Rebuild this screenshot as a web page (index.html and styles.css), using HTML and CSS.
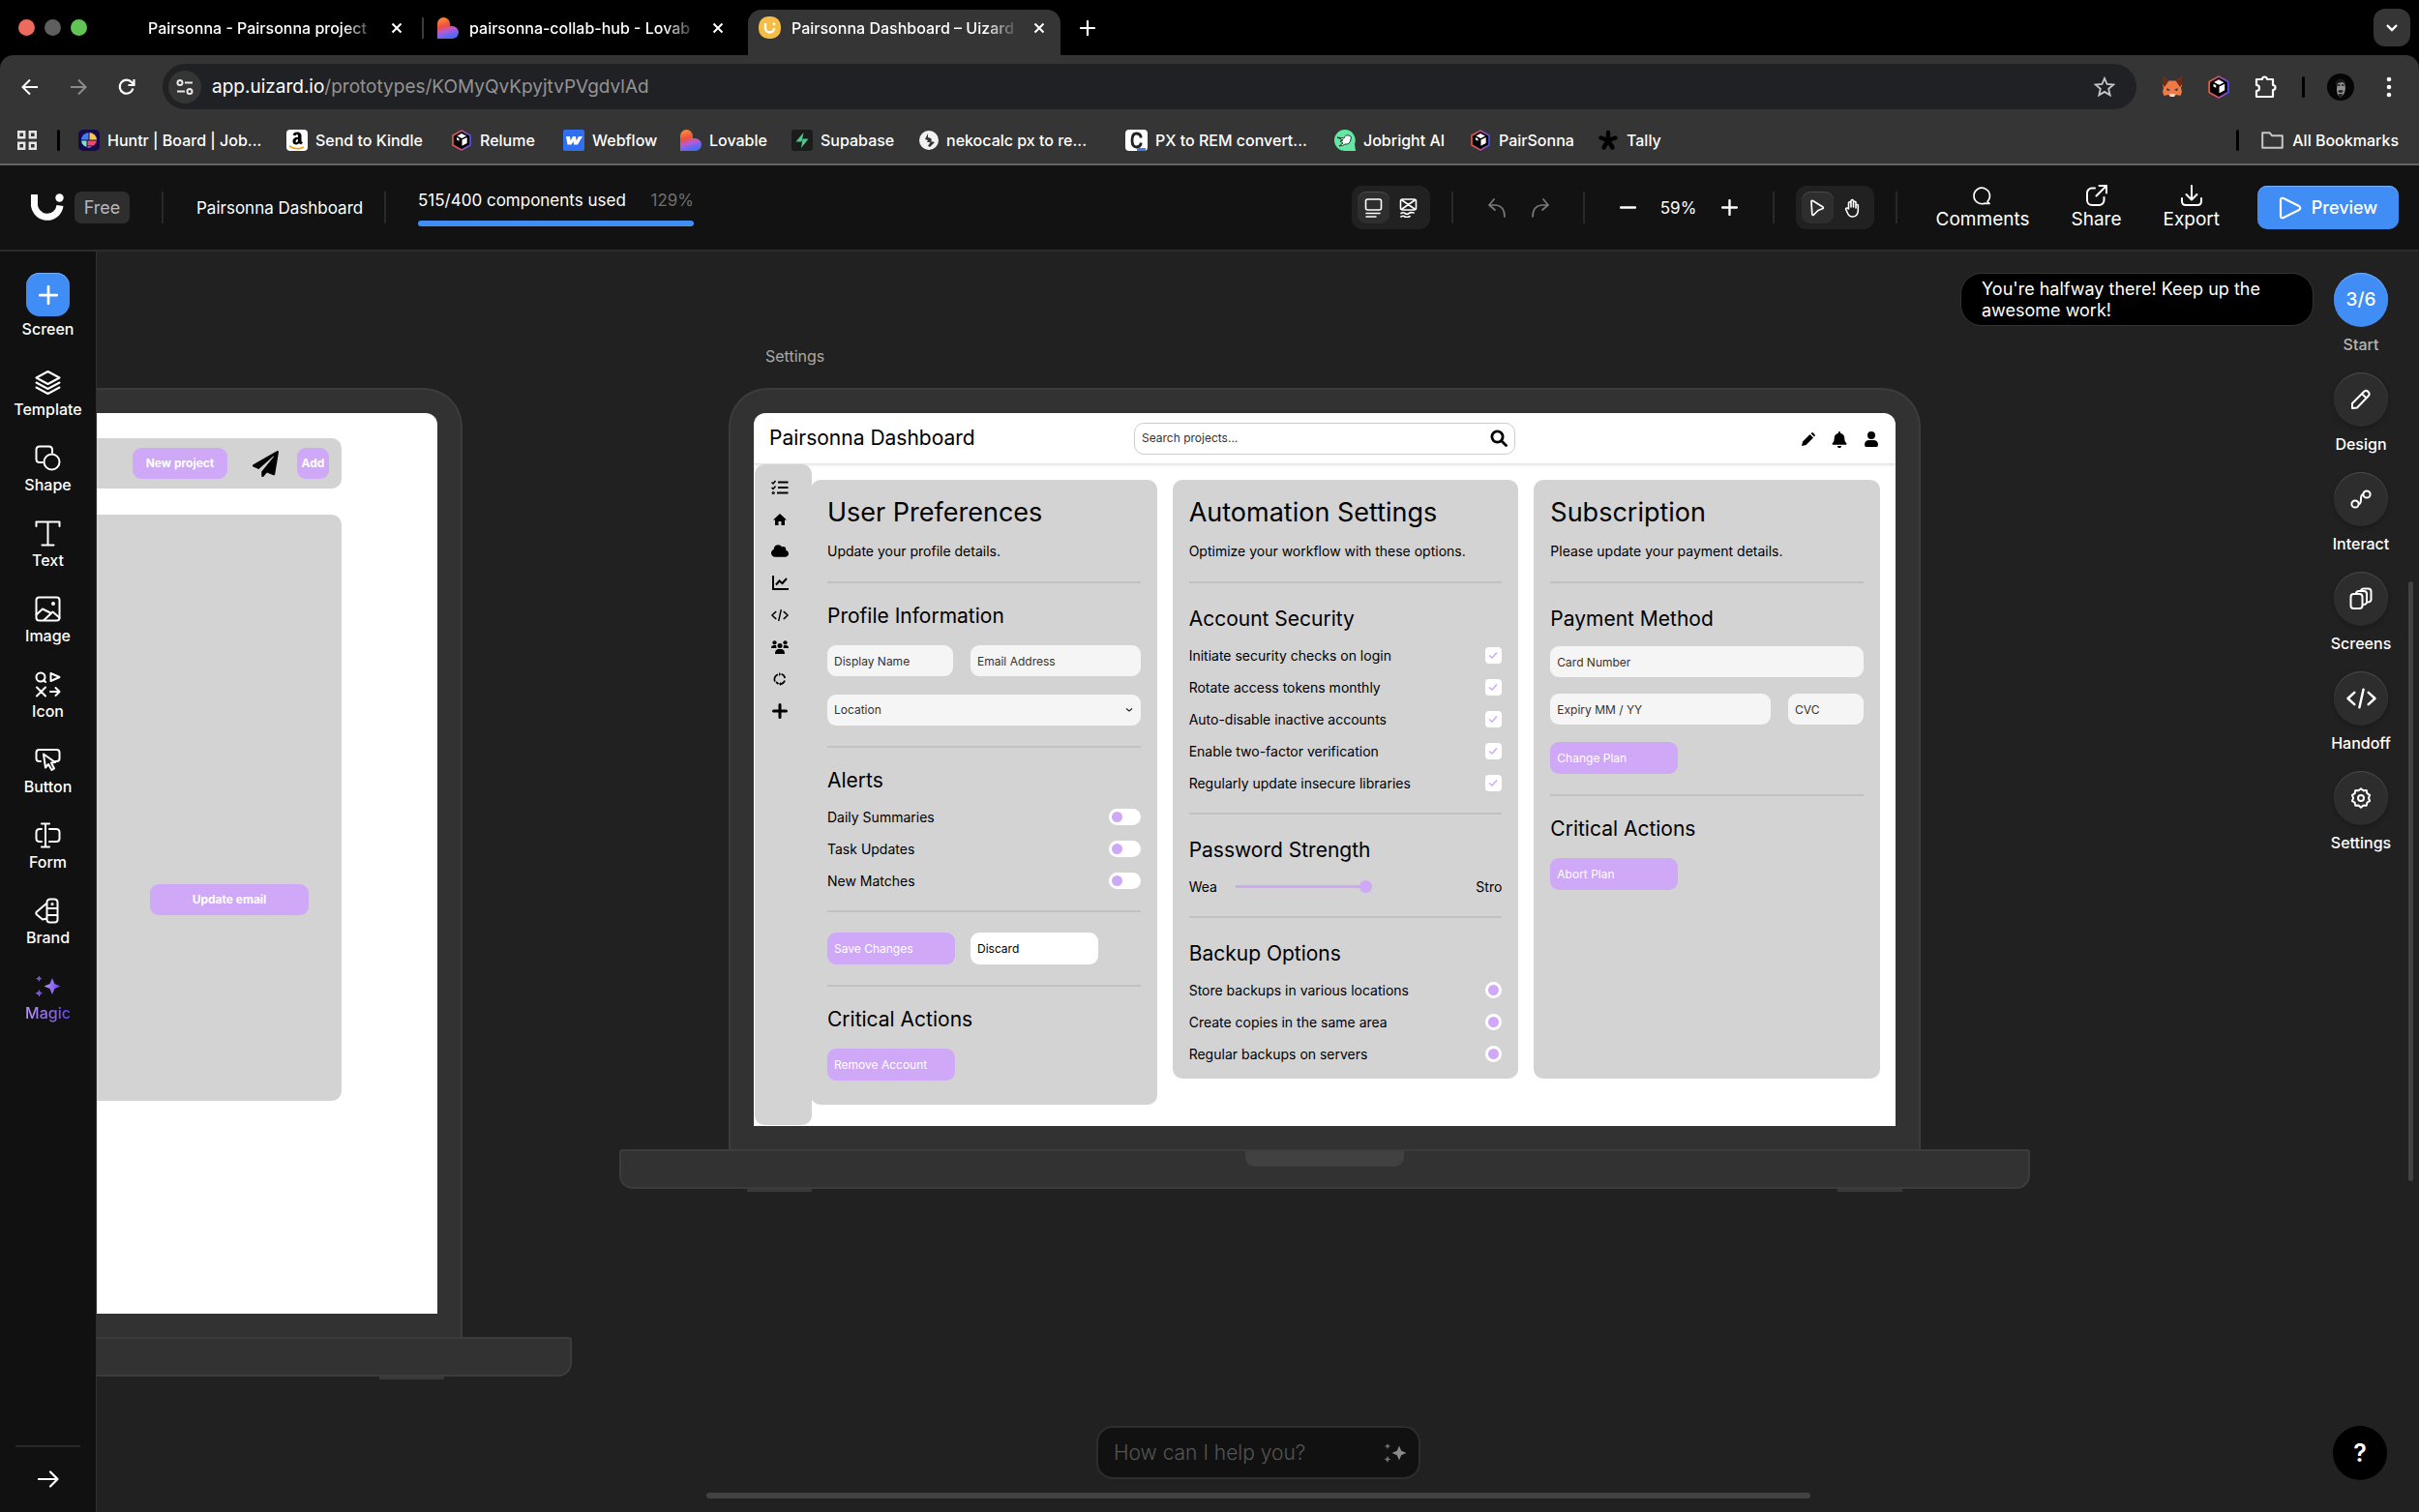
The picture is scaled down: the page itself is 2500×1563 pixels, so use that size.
FILE: index.html
```html
<!DOCTYPE html>
<html lang="en">
<head>
<meta charset="utf-8">
<title>Pairsonna Dashboard – Uizard</title>
<link rel="stylesheet" href="styles.css">
</head>
<body>
<svg class="defs" aria-hidden="true">
  <defs>
    <linearGradient id="heart" x1="0" y1="0" x2="0.3" y2="1"><stop offset="0" stop-color="#ff9a3c"/><stop offset=".45" stop-color="#f0503c"/><stop offset=".7" stop-color="#b45bd8"/><stop offset="1" stop-color="#4a6cf7"/></linearGradient>
    <linearGradient id="hex" x1="0" y1="0" x2="1" y2="0"><stop offset="0" stop-color="#f05a3c"/><stop offset=".5" stop-color="#c0508c"/><stop offset="1" stop-color="#5a50f5"/></linearGradient>
    <linearGradient id="magic" x1="0" y1="0" x2="1" y2="0"><stop offset="0" stop-color="#b79cf5"/><stop offset="1" stop-color="#6a3df0"/></linearGradient>
  </defs>
  <symbol id="i-x" viewBox="0 0 12 12"><path d="M1.500 1.500l9 9M10.500 1.500l-9 9" fill="none" stroke="currentColor" stroke-width="2"/></symbol>
  <symbol id="i-plus" viewBox="0 0 16 16"><path d="M8 1v14M1 8h14" fill="none" stroke="currentColor" stroke-width="2.200" stroke-linecap="round"/></symbol>
  <symbol id="i-minus" viewBox="0 0 16 16"><path d="M1 8h14" fill="none" stroke="currentColor" stroke-width="2.400" stroke-linecap="round"/></symbol>
  <symbol id="i-lovable" viewBox="0 0 22 22"><path d="M0 6.500a6.500 6.500 0 0 1 13 0V9h2.500a6.500 6.500 0 0 1 0 13H0z" fill="url(#heart)"/></symbol>
  <symbol id="i-cube" viewBox="0 0 22 22"><path d="M11 1l9 5v10l-9 5-9-5V6z" fill="#000" stroke="url(#hex)" stroke-width="1.600" stroke-linejoin="round"/><path d="M11 4l5 2.600-4.500 2.400-5-2.600zM11.500 10.500l5.200-2.500v6l-5.200 2.800zM6 8l2.500 1.200v2.500L6 10.500z" fill="#fff"/></symbol>
  <symbol id="i-spark" viewBox="0 0 24 20"><path d="M16 2.500l2.200 5.300 5.300 2.200-5.300 2.200L16 17.500l-2.200-5.300L8.500 10l5.300-2.200z"/><path d="M4 0l.9 2.100L7 3l-2.100.9L4 6l-.9-2.100L1 3l2.100-.9zM4 13l1.100 2.400L7.500 16.500l-2.400 1.100L4 20l-1.100-2.400L.5 16.500l2.400-1.100z" opacity=".8"/></symbol>
  <symbol id="i-code" viewBox="0 0 30 20"><path d="M8 4L1.500 10 8 16M22 4l6.500 6-6.500 6M17 1l-4 18" fill="none" stroke="currentColor" stroke-width="2.400" stroke-linecap="round" stroke-linejoin="round"/></symbol>
  <symbol id="i-check" viewBox="0 0 16 16"><path d="M4 8.500l3 2.500 5-5.500" fill="none" stroke="#cfa8f8" stroke-width="1.500"/></symbol>
</svg>

<div class="browser">
  <div class="tabs">
    <div class="lights"><i class="red"></i><i class="gray"></i><i class="green"></i></div>
    <div class="tab tab-first"><span class="tab-title">Pairsonna - Pairsonna project</span><button class="plain" aria-label="Close tab"><svg width="12" height="12"><use href="#i-x"/></svg></button></div>
    <div class="tab tab-line"><svg width="22" height="22"><use href="#i-lovable"/></svg><span class="tab-title">pairsonna-collab-hub - Lovab</span><button class="plain" aria-label="Close tab"><svg width="12" height="12"><use href="#i-x"/></svg></button></div>
    <div class="tab tab-active"><svg width="23" height="23" viewBox="0 0 23 23"><rect width="23" height="23" rx="10" fill="#f5bd45"/><path d="M7 7v5a4.500 4.500 0 0 0 9 0" fill="none" stroke="#fff" stroke-width="2.400"/><circle cx="16" cy="8" r="1.400" fill="#fff"/></svg><span class="tab-title">Pairsonna Dashboard – Uizard</span><button class="plain" aria-label="Close tab"><svg width="12" height="12"><use href="#i-x"/></svg></button></div>
    <button class="plain new-tab" aria-label="New tab"><svg width="16" height="16"><use href="#i-plus"/></svg></button>
    <button class="tab-menu" aria-label="Search tabs"><svg width="14" height="10" viewBox="0 0 14 10"><path d="M2 2l5 5 5-5" fill="none" stroke="#fff" stroke-width="2.400"/></svg></button>
  </div>
  <div class="address">
    <button class="plain" aria-label="Back"><svg width="18" height="18" viewBox="0 0 18 18"><path d="M17 9H2M9 1.500L1.500 9 9 16.500" fill="none" stroke="#fff" stroke-width="2"/></svg></button>
    <button class="plain" aria-label="Forward"><svg width="18" height="18" viewBox="0 0 18 18"><path d="M1 9h15M9 1.500L16.500 9 9 16.500" fill="none" stroke="#8c8c8c" stroke-width="2"/></svg></button>
    <button class="plain" aria-label="Reload"><svg width="18" height="18" viewBox="0 0 18 18"><path d="M15.500 10.500A7 7 0 1 1 14 4l2.500 2.500M16.500 1v6h-6" fill="none" stroke="#fff" stroke-width="2.200"/></svg></button>
    <div class="omnibox">
      <span class="tune"><svg width="18" height="16" viewBox="0 0 18 16"><g fill="none" stroke="#e8e8e8" stroke-width="2"><circle cx="4" cy="3.500" r="2.500"/><path d="M9 3.500h8M1 12.500h8"/><circle cx="14" cy="12.500" r="2.500"/></g></svg></span>
      <span class="url"><b>app.uizard.io</b>/prototypes/KOMyQvKpyjtvPVgdvlAd</span>
      <svg width="22" height="22" viewBox="0 0 22 22"><path d="M11 2l2.600 6 6.500.600-4.900 4.300 1.500 6.400-5.700-3.400-5.700 3.400 1.500-6.400L1.900 8.600 8.400 8z" fill="none" stroke="#c7c7c7" stroke-width="1.800"/></svg>
    </div>
    <div class="extensions">
      <svg width="22" height="22" viewBox="0 0 22 22"><path d="M1 0l6 4.500h8L21 0v9l-1 3 1 4-1.500 4-4.500-1-2 2h-4l-2-2-4.500 1L1 16l1-4-1-3z" fill="#ee7b45"/><path d="M1 0l6.500 4.500L3 11 1 8zM21 0l-6.500 4.500L19 11l2-3z" fill="#6e2a14"/><path d="M8 18h6l-1 3H9z" fill="#e8dcd4"/><path d="M5 12l4 2-3 1zM17 12l-4 2 3 1z" fill="#27303d"/></svg>
      <svg width="24" height="24"><use href="#i-cube"/></svg>
      <svg width="24" height="24" viewBox="0 0 24 24"><path d="M2 4h6a2.500 2.500 0 0 1 5 0h6v6a2.500 2.500 0 0 1 0 5v7H2v-6a3 3 0 0 0 0-6z" fill="none" stroke="#fff" stroke-width="2.200" stroke-linejoin="round"/></svg>
      <i class="vbar"></i>
      <svg class="avatar" width="28" height="28" viewBox="0 0 28 28"><circle cx="14" cy="14" r="14" fill="#050505"/><path d="M10 9q4-3 8 0l1 6q-1 8-5 9-3 0-4-6z" fill="#8f8f8f"/><path d="M9 10q1-5 6-4 4 0 4 5l-3-2-5 1-1 5z" fill="#1a1a1a"/><path d="M11 12h2.500M15 12h2.500" stroke="#1a1a1a" stroke-width="1.400"/><path d="M11 18q3-2 6 0-1 2-3 2t-3-2zM12 21h4l-1 4h-3z" fill="#262626"/></svg>
      <svg width="6" height="22" viewBox="0 0 6 22" fill="#fff"><circle cx="3" cy="3" r="2.300"/><circle cx="3" cy="11" r="2.300"/><circle cx="3" cy="19" r="2.300"/></svg>
    </div>
  </div>
  <div class="bookmarks">
    <svg class="apps" width="20" height="20" viewBox="0 0 20 20" fill="none" stroke="#e6e6e6" stroke-width="2.400"><path d="M1.200 1.200h6v6h-6zM12.800 1.200h6v6h-6zM1.200 12.800h6v6h-6zM12.800 12.800h6v6h-6z"/></svg>
    <i class="vbar"></i>
    <nav class="marks">
      <a href="#"><svg width="22" height="22" viewBox="0 0 22 22"><rect width="22" height="22" rx="5" fill="#160a4a"/><path d="M10.500 3v7.500H3A8 8 0 0 1 10.500 3z" fill="#3f7df0"/><path d="M11.500 3v7.500H19A8 8 0 0 0 11.500 3z" fill="#f7c948"/><path d="M3 11.500h5.500V18A8 8 0 0 1 3 11.500z" fill="#7de8c0"/><path d="M9.500 11.500H19a8 8 0 0 1-3 5H9.500z" fill="#f04a6e"/><path d="M9.500 17.200h5A8 8 0 0 1 9.500 19z" fill="#9a6cf5"/></svg>Huntr | Board | Job...</a>
      <a href="#"><svg width="22" height="22" viewBox="0 0 22 22"><rect width="22" height="22" rx="4" fill="#fff"/><path d="M6.500 5.500q1-3 4.800-3T15.500 6v6l1.500 1.500-2 2-1.800-1.300q-1.500 1.300-3.700 1.300Q6.500 15 6.500 12q0-4 5.500-4.200V6.500Q12 5 11 5T9.500 6.300zM12 10q-2.500 0-2.500 2 0 1.200 1 1.200 1.500-.2 1.500-2.200z" fill="#000"/><path d="M3 17q8 5 15 1" fill="none" stroke="#f90" stroke-width="1.500"/></svg>Send to Kindle</a>
      <a href="#"><svg width="22" height="22"><use href="#i-cube"/></svg>Relume</a>
      <a href="#"><svg width="22" height="22" viewBox="0 0 22 22"><rect width="22" height="22" rx="2" fill="#2f6ff0"/><path d="M3 7h4l.7 4.500L10 7h3l.6 4.500L16 7h4l-5 8.500h-4l-.5-3.500-2 3.500H4.500z" fill="#fff"/></svg>Webflow</a>
      <a href="#"><svg width="22" height="22"><use href="#i-lovable"/></svg>Lovable</a>
      <a href="#"><svg width="22" height="22" viewBox="0 0 22 22"><rect width="22" height="22" rx="3" fill="#1c1c1c"/><path d="M12.500 3L4.500 12.500h6zM10 19l7.500-9.500h-6z" fill="#4fc98e"/></svg>Supabase</a>
      <a href="#"><svg width="20" height="20" viewBox="0 0 20 20"><circle cx="10" cy="10" r="10" fill="#f2f2f2"/><path d="M9 3L6 9l3 1-1 2h3q3-2 1-4L9 7zM12 11l4 1-5 5-2-1z" fill="#333"/></svg>nekocalc px to re...</a>
      <a href="#"><svg width="23" height="22" viewBox="0 0 23 22"><rect width="23" height="22" rx="4" fill="#fff"/><path d="M16 8.500V7q-1-3-4.500-3Q7 4 7 11t4.500 7Q15 18 16 15v-1.500" fill="none" stroke="#222" stroke-width="2.800"/><path d="M12 19h9v3h-9z" fill="#3d7cf0"/></svg>PX to REM convert...</a>
      <a href="#"><svg width="22" height="22" viewBox="0 0 22 22"><path d="M11 0a11 11 0 0 1 10 15l1 7H11A11 11 0 0 1 11 0z" fill="#62e8a2"/><path d="M3 8l7 1q1-4 5-3 4 1 2 4-1 6-6 5-2 2-6 2l4-3-3-2 3-1z" fill="#fff" stroke="#1d3a2c"/></svg>Jobright AI</a>
      <a href="#"><svg width="22" height="22"><use href="#i-cube"/></svg>PairSonna</a>
      <a href="#"><svg width="22" height="22" viewBox="0 0 22 22"><path d="M11 11V3M11 11l7.500-2.500M11 11l4.500 7.500M11 11l-4.500 7.500M11 11L3.500 8.500" stroke="#000" stroke-width="4.400" stroke-linecap="round"/></svg>Tally</a>
    </nav>
    <i class="vbar"></i>
    <a class="all" href="#"><svg width="23" height="18" viewBox="0 0 23 18"><path d="M1.200 1.200h7.300l2.500 3h10.800v12.600H1.200z" fill="none" stroke="#c7c7c7" stroke-width="2" stroke-linejoin="round"/></svg>All Bookmarks</a>
  </div>
</div>

<header class="appbar">
  <svg class="logo" width="34" height="29" viewBox="0 0 34 29"><path d="M3.500 1v8.500a13 13 0 0 0 26.500 3" fill="none" stroke="#fff" stroke-width="7"/><circle cx="29.500" cy="4.500" r="4.200" fill="#fff"/></svg>
  <span class="badge">Free</span>
  <i class="sep"></i>
  <span class="doc">Pairsonna Dashboard</span>
  <i class="sep"></i>
  <div class="usage"><div class="usage-row"><span>515/400 components used</span><span class="dim">129%</span></div><div class="usage-bar"></div></div>
  <div class="tools">
    <div class="seg">
      <button class="on" aria-label="High fidelity"><svg width="19" height="20" viewBox="0 0 19 20" fill="none" stroke="#fff" stroke-width="1.600" stroke-linecap="round"><rect x="1.500" y="1" width="16" height="11" rx="2"/><path d="M2 15.500h14M2 19h10"/></svg></button>
      <button aria-label="Wireframe"><svg width="19" height="20" viewBox="0 0 19 20" fill="none" stroke="#fff" stroke-width="1.600" stroke-linecap="round"><rect x="1.500" y="1" width="16" height="11" rx="2"/><path d="M3 2l13 9M16 2L3 11M2 15.500q2-1.500 4 0t4 0 5-.5M2 19q2-1.500 4 0t5-.5"/></svg></button>
    </div>
    <i class="sep"></i>
    <div class="pair">
      <button class="plain" aria-label="Undo"><svg width="20" height="20" viewBox="0 0 20 20" fill="none" stroke="#7a7a7a" stroke-width="1.700" stroke-linecap="round" stroke-linejoin="round"><path d="M7 1L2 7l6 5M2 7h7q9 1 9 12"/></svg></button>
      <button class="plain" aria-label="Redo"><svg width="20" height="20" viewBox="0 0 20 20" fill="none" stroke="#7a7a7a" stroke-width="1.700" stroke-linecap="round" stroke-linejoin="round"><path d="M13 1l5 6-6 5M18 7h-7q-9 1-9 12"/></svg></button>
    </div>
    <i class="sep"></i>
    <div class="zoom">
      <button class="plain" aria-label="Zoom out"><svg width="17" height="17"><use href="#i-minus"/></svg></button>
      <span>59%</span>
      <button class="plain" aria-label="Zoom in"><svg width="17" height="17"><use href="#i-plus"/></svg></button>
    </div>
    <i class="sep"></i>
    <div class="seg">
      <button class="on" aria-label="Select"><svg width="16" height="18" viewBox="0 0 16 18"><path d="M2 2.500q0-1.500 1.500-1L14 8q1 1-.5 1.800L9 11.500 4.500 16Q3 17 2.800 15.500z" fill="none" stroke="#fff" stroke-width="1.700" stroke-linejoin="round"/></svg></button>
      <button aria-label="Pan"><svg width="16" height="20" viewBox="0 0 16 20" fill="none" stroke="#fff" stroke-width="1.600" stroke-linecap="round" stroke-linejoin="round"><path d="M4.500 11V4.500q1.300-1.500 2.500 0V9 2.500q1.300-2 2.500 0V9 4q1.300-1.500 2.500 0v6-3q1.500-1 2.300 0v6q-.5 6-6 6-3 0-4.500-3L1.500 11q1-2 3 0z"/></svg></button>
    </div>
    <i class="sep"></i>
    <div class="acts">
      <button class="act"><svg width="20" height="20" viewBox="0 0 20 20"><path d="M17 18.500l-2-2.200A8.200 8.200 0 1 0 12 18.200l4.500.3z" fill="none" stroke="#fff" stroke-width="1.700" stroke-linejoin="round"/></svg>Comments</button>
      <button class="act"><svg width="22" height="22" viewBox="0 0 22 22" fill="none" stroke="#fff" stroke-width="2" stroke-linecap="round" stroke-linejoin="round"><path d="M9 3.500H6a5 5 0 0 0-5 5V16a5 5 0 0 0 5 5h7.500a5 5 0 0 0 5-5v-3M10.500 11.500L21 1M13.500 1H21v7.500"/></svg>Share</button>
      <button class="act"><svg width="22" height="22" viewBox="0 0 22 22" fill="none" stroke="#fff" stroke-width="2" stroke-linecap="round" stroke-linejoin="round"><path d="M11 1v14M5.500 10l5.500 5.500 5.500-5.500M1 14v3q0 4 4 4h12q4 0 4-4v-3"/></svg>Export</button>
    </div>
    <button class="preview"><svg width="24" height="24" viewBox="0 0 24 24"><path d="M2 4q0-3 3-2l16 8q2.500 2 0 4L5 22q-3 1-3-2z" fill="none" stroke="#fff" stroke-width="2.200"/></svg>Preview</button>
  </div>
</header>

<div class="work">
  <nav class="rail">
    <button class="tool add"><span class="plus"><svg width="20" height="20"><use href="#i-plus"/></svg></span>Screen</button>
    <button class="tool"><svg width="27" height="27" viewBox="0 0 27 27"><path d="M13.500 2l12 6.500-12 6.500-12-6.500zM1.500 13.500l12 6.500 12-6.500M1.500 18.500l12 6.500 12-6.500"/></svg>Template</button>
    <button class="tool"><svg width="27" height="27" viewBox="0 0 27 27"><path d="M8 18H5q-3.500 0-3.500-3.500V5Q1.500 1.500 5 1.500h9.500Q18 1.500 18 5v3"/><circle cx="17.500" cy="17.500" r="8"/></svg>Shape</button>
    <button class="tool"><svg width="27" height="27" viewBox="0 0 27 27"><path d="M1.500 6V1.500h24V6M13.500 1.500v24M7.500 25.500h12"/></svg>Text</button>
    <button class="tool"><svg width="27" height="27" viewBox="0 0 27 27"><rect x="1.500" y="1.500" width="24" height="24" rx="3"/><path d="M1.500 19.500L8 13.500l8 4M9.500 25l9-8.500 7 6"/><circle cx="19" cy="8" r="1"/></svg>Image</button>
    <button class="tool"><svg width="27" height="27" viewBox="0 0 27 27"><circle cx="6" cy="6" r="4.500"/><path d="M9 9l2 2M16.500 2v8l9-4zM2 16.500l9 9M11 16.500l-9 9M16 21h9.500M21.500 17l4 4-4 4"/></svg>Icon</button>
    <button class="tool"><svg width="27" height="27" viewBox="0 0 27 27"><path d="M6 15H4.500q-3 0-3-3V6q0-3 3-3h18q3 0 3 3v6q0 3-3 3h-1M9 7.500l2 14 3-3.500 3.500 6 2.500-1.500-3-6 4-.5z"/></svg>Button</button>
    <button class="tool"><svg width="27" height="27" viewBox="0 0 27 27"><path d="M7 20H5q-3.500 0-3.500-3.500v-6Q1.500 7 5 7h2M15 7h7q3.500 0 3.500 3.500v6q0 3.500-3.500 3.500h-7M11 1.500v24M7 1.500h8M7 25.500h8"/></svg>Form</button>
    <button class="tool"><svg width="27" height="27" viewBox="0 0 27 27"><path d="M12.500 5.500L2 14.500q-1.500 1.500 0 3l6 5 4.500-1M12.500 5v17.500q0 3 3 3h5q3 0 3-3V5q0-3.500-3.500-3.500h-4q-3.500 0-3.500 3.500M12.500 11h11M12.500 18h11"/><circle cx="18" cy="6.500" r=".6"/></svg>Brand</button>
    <button class="tool magic"><svg width="27" height="27" viewBox="0 0 24 20" fill="url(#magic)"><use href="#i-spark"/></svg><span>Magic</span></button>
    <button class="expand" aria-label="Expand sidebar"><svg width="22" height="18" viewBox="0 0 22 18"><path d="M1 9h19M13 1.500L20.500 9 13 16.500" fill="none" stroke="#fff" stroke-width="2.200" stroke-linecap="round" stroke-linejoin="round"/></svg></button>
  </nav>

  <main class="canvas">
    <section class="laptop laptop-a">
      <div class="lid"><div class="screen screen-a">
        <div class="strip">
          <button class="pill pill-new">New project</button>
          <svg width="27" height="27" viewBox="0 0 512 512"><path d="M476 3.200L12.500 270.600c-18.100 10.400-15.800 35.600 2.200 43.200L121 358.400l287.300-253.200c5.500-4.900 13.300 2.600 8.600 8.300L176 407v80.500c0 23.600 28.500 32.900 42.500 15.800L282 426l124.600 52.200c14.200 6 30.400-2.900 33-18.200l72-432C515 7.800 493.300-6.800 476 3.200z"/></svg>
          <button class="pill pill-add">Add</button>
        </div>
        <div class="panel"><button class="pill pill-email">Update email</button></div>
      </div></div>
      <div class="base"><i class="foot"></i><i class="foot"></i></div>
    </section>

    <span class="frame-name">Settings</span>
    <section class="laptop laptop-b">
      <div class="lid"><div class="screen">
        <div class="top">
          <span class="brand">Pairsonna Dashboard</span>
          <label class="search"><input type="text" aria-label="Search projects" placeholder="Search projects..."><svg width="18" height="18" viewBox="0 0 18 18" fill="none" stroke="#000" stroke-width="2.800" stroke-linecap="round"><circle cx="7.500" cy="7.500" r="5.600"/><path d="M12 12l4.500 4.500"/></svg></label>
          <div class="top-icons">
            <svg width="14" height="14" viewBox="0 0 14 14"><path d="M0 14l1-4.500L8.500 2 12 5.500 4.500 13zM9.500 1L11 0q1.200 0 3 3L13 4.500z"/></svg>
            <svg width="16" height="17" viewBox="0 0 448 512"><path d="M224 512c35.320 0 63.970-28.650 63.970-64H160.030c0 35.350 28.650 64 63.970 64zm215.390-149.710c-19.320-20.760-55.470-51.990-55.470-154.290 0-77.700-54.480-139.900-127.940-155.160V32c0-17.670-14.320-32-31.980-32s-31.980 14.330-31.980 32v20.840C118.560 68.100 64.080 130.300 64.080 208c0 102.300-36.150 133.530-55.470 154.290-6 6.450-8.660 14.160-8.610 21.710.11 16.400 12.980 32 32.100 32h383.800c19.120 0 32-15.600 32.100-32 .05-7.550-2.610-15.270-8.610-21.710z"/></svg>
            <svg width="16" height="16" viewBox="0 0 16 16"><circle cx="8" cy="4" r="4"/><path d="M1 14q0-5 5-5h4q5 0 5 5 0 2-2 2H3q-2 0-2-2z"/></svg>
          </div>
        </div>
        <div class="page">
          <nav class="side">
            <svg width="18" height="16" viewBox="0 0 18 16" fill="none" stroke="#000" stroke-width="2"><path d="M7 2.500h10.500M7 8h10.500M6 13.500h11.500"/><path d="M.5 2.500L2 4l2.500-3M.5 8L2 9.500l2.500-3" stroke-width="1.500"/><circle cx="2.200" cy="13.500" r=".6"/></svg>
            <svg width="14" height="14" viewBox="0 0 14 14"><path d="M7 1l7 6.500h-2V13H8.500V9h-3v4H2V7.500H0z"/></svg>
            <svg width="18" height="15" viewBox="0 30 640 455"><path d="M537.600 226.600c4.100-10.700 6.400-22.400 6.400-34.600 0-53-43-96-96-96-19.700 0-38.100 6-53.300 16.200C367 64.200 315.300 32 256 32c-88.400 0-160 71.600-160 160 0 2.700.1 5.400.2 8.100C40.200 219.800 0 273.200 0 336c0 79.500 64.500 144 144 144h368c70.700 0 128-57.300 128-128 0-61.900-44-113.600-102.400-125.400z"/></svg>
            <svg width="17" height="15" viewBox="0 0 17 15" fill="none" stroke="#000" stroke-width="2"><path d="M1 0v14h16M4 9.500l3.500-4 3 2.500 4.500-5" /></svg>
            <svg width="18" height="14"><use href="#i-code"/></svg>
            <svg width="18" height="14" viewBox="0 0 18 14"><circle cx="3.500" cy="2.300" r="2.100"/><circle cx="14.500" cy="2.300" r="2.100"/><circle cx="9" cy="5.500" r="2.500"/><path d="M0 8q0-3 3-3h2l.5 3zM18 8q0-3-3-3h-2l-.5 3zM4 14q0-5 4-5h2q4 0 4 5z"/></svg>
            <svg width="14" height="14" viewBox="0 0 14 14" fill="none" stroke="#000" stroke-width="1.700"><path d="M2 9.500A5.200 5.200 0 0 1 5 2.200M8.500 1.800A5.200 5.200 0 0 1 12.200 6M12 8.500a5.200 5.200 0 0 1-4 3.600M5.500 12L3 10"/><path d="M6 0l2 2-2 2zM8 10l-2 2 2 2z" fill="#000" stroke="none"/></svg>
            <svg width="16" height="16" viewBox="0 0 16 16"><path d="M8 1.500v13M1.500 8h13" stroke="#000" stroke-width="3" stroke-linecap="round"/></svg>
          </nav>
          <div class="cards">
            <section class="card card-tall">
              <h2>User Preferences</h2><p>Update your profile details.</p><hr>
              <h3 class="tight">Profile Information</h3>
              <div class="fields name-row"><input type="text" aria-label="Display Name" placeholder="Display Name"><input type="text" aria-label="Email Address" placeholder="Email Address"></div>
              <div class="fields select-wrap"><select aria-label="Location"><option>Location</option></select><svg width="8" height="6" viewBox="0 0 8 6"><path d="M1 1.500l3 2.500 3-2.500" fill="none" stroke="#222" stroke-width="1.200"/></svg></div>
              <hr>
              <h3 class="tight">Alerts</h3>
              <div class="rows">
                <label>Daily Summaries<input class="switch" type="checkbox"></label>
                <label>Task Updates<input class="switch" type="checkbox"></label>
                <label>New Matches<input class="switch" type="checkbox"></label>
              </div>
              <hr class="after-rows">
              <div class="buttons"><button class="btn">Save Changes</button><button class="btn btn-white">Discard</button></div>
              <hr>
              <h3 class="tight">Critical Actions</h3>
              <button class="btn">Remove Account</button>
            </section>
            <section class="card">
              <h2>Automation Settings</h2><p>Optimize your workflow with these options.</p><hr>
              <h3>Account Security</h3>
              <div class="rows">
                <label>Initiate security checks on login<span class="box"><input type="checkbox" checked><svg width="16" height="16"><use href="#i-check"/></svg></span></label>
                <label>Rotate access tokens monthly<span class="box"><input type="checkbox" checked><svg width="16" height="16"><use href="#i-check"/></svg></span></label>
                <label>Auto-disable inactive accounts<span class="box"><input type="checkbox" checked><svg width="16" height="16"><use href="#i-check"/></svg></span></label>
                <label>Enable two-factor verification<span class="box"><input type="checkbox" checked><svg width="16" height="16"><use href="#i-check"/></svg></span></label>
                <label>Regularly update insecure libraries<span class="box"><input type="checkbox" checked><svg width="16" height="16"><use href="#i-check"/></svg></span></label>
              </div>
              <hr class="after-rows">
              <h3>Password Strength</h3>
              <div class="rows"><div class="strength"><span>Wea</span><input type="range" min="0" max="100" value="100" aria-label="Password strength"><span>Stro</span></div></div>
              <hr class="after-rows">
              <h3>Backup Options</h3>
              <div class="rows">
                <label>Store backups in various locations<input class="dot" type="radio" name="b1" checked></label>
                <label>Create copies in the same area<input class="dot" type="radio" name="b2" checked></label>
                <label>Regular backups on servers<input class="dot" type="radio" name="b3" checked></label>
              </div>
            </section>
            <section class="card">
              <h2>Subscription</h2><p>Please update your payment details.</p><hr>
              <h3>Payment Method</h3>
              <div class="fields card-row"><input type="text" aria-label="Card Number" placeholder="Card Number"></div>
              <div class="fields pay-row"><input type="text" aria-label="Expiry" placeholder="Expiry MM / YY"><input type="text" aria-label="CVC" placeholder="CVC"></div>
              <button class="btn btn-plan">Change Plan</button>
              <hr>
              <h3 class="tight">Critical Actions</h3>
              <button class="btn">Abort Plan</button>
            </section>
          </div>
        </div>
      </div></div>
      <div class="base"><i class="notch"></i><i class="foot"></i><i class="foot"></i></div>
    </section>

    <div class="tip">You're halfway there! Keep up the awesome work!</div>
    <nav class="modes">
      <button class="mode mode-start"><span>3/6</span>Start</button>
      <button class="mode"><span><svg width="22" height="22" viewBox="0 0 22 22"><path d="M2 15L14.500 2.500q2-1.500 4 .5t.5 4L7 19.500l-5 .5zM12 5l5 5"/></svg></span>Design</button>
      <button class="mode"><span><svg width="22" height="22" viewBox="0 0 22 22"><circle cx="5" cy="16" r="3.600"/><circle cx="17" cy="6" r="3.600"/><path d="M8.500 16q2.500 0 2.500-5t2.500-5"/></svg></span>Interact</button>
      <button class="mode"><span><svg width="24" height="24" viewBox="0 0 24 24"><rect x="1.500" y="7" width="12" height="15" rx="3"/><path d="M7 6.500q0-2.500 3-2.500h5q3 0 3 3v8q0 3-4 3M12 3.500q.5-2 3-2h4.500q3 0 3 3v8q0 3-4 3"/></svg></span>Screens</button>
      <button class="mode"><span><svg width="31" height="22"><use href="#i-code"/></svg></span>Handoff</button>
      <button class="mode"><span><svg width="22" height="22" viewBox="0 0 22 22"><path d="M11 1.200l2.500 2 3.200-.2.700 3.200 2.700 1.700-1.200 3 1.200 3-2.700 1.700-.7 3.200-3.200-.2-2.500 2.200-2.500-2.200-3.200.2-.7-3.200L1.900 14l1.200-3-1.200-3 2.700-1.800L5.300 3l3.200.2z"/><circle cx="11" cy="11" r="3"/></svg></span>Settings</button>
    </nav>
    <div class="ask"><input type="text" aria-label="Ask the assistant" placeholder="How can I help you?"><svg width="24" height="22" fill="#8a8a8a"><use href="#i-spark"/></svg></div>
    <button class="help" aria-label="Help">?</button>
    <i class="vscroll"></i>
    <i class="hscroll"></i>
  </main>
</div>
</body>
</html>
```
FILE: styles.css
```css
* { box-sizing: border-box; }
body { margin: 0; height: 100vh; min-height: 1100px; display: flex; flex-direction: column; background: #000; color: #fff; font: 500 18px/22px Inter, "Liberation Sans", sans-serif; overflow: hidden; }
button, input, select { font: inherit; color: inherit; margin: 0; padding: 0; border: 0; background: none; }
a { color: inherit; text-decoration: none; }
svg { flex: none; display: block; }
i { display: block; flex: none; }
.defs { position: absolute; width: 0; height: 0; }
.plain { display: flex; align-items: center; justify-content: center; }

/* browser chrome */
.browser { flex: none; font-size: 16px; line-height: 20px; }
.tabs { display: flex; align-items: center; height: 57px; padding: 0 9px 0 19px; background: #000; }
.lights { display: flex; gap: 10px; width: 134px; }
.lights i { width: 17px; height: 17px; border-radius: 50%; }
.red { background: #ed6a5e; }
.gray { background: #5f5f5f; }
.green { background: #61c454; }
.tab { display: flex; align-items: center; height: 47px; margin-top: 10px; padding-bottom: 10px; }
.tab-title { flex: 1; margin: 0 14px 0 11px; overflow: hidden; white-space: nowrap; -webkit-mask-image: linear-gradient(to right, #000 85%, transparent); mask-image: linear-gradient(to right, #000 85%, transparent); }
.tab-first { width: 283px; padding-right: 20px; }
.tab-first .tab-title { margin-left: 0; }
.tab-line { width: 337px; padding: 0 25px 10px 16px; position: relative; }
.tab-line::before { content: ""; position: absolute; left: 0; top: 8px; width: 2px; height: 22px; background: #3c3c3c; }
.tab-active { width: 323px; padding: 0 16px 10px 11px; background: #353535; border-radius: 14px 14px 0 0; }
.new-tab { width: 56px; height: 40px; }
.tab-menu { margin-left: auto; width: 38px; height: 39px; border-radius: 12px; background: #353535; display: flex; align-items: center; justify-content: center; }
.address { display: flex; align-items: center; height: 64px; padding: 1px 28px 0 22px; background: #353535; border-radius: 14px 14px 0 0; }
.address > .plain { width: 18px; margin-right: 32px; }
.omnibox { flex: 1; height: 47px; display: flex; align-items: center; padding: 0 22px 0 6px; margin-left: -4px; border-radius: 24px; background: #202124; font-size: 19px; font-weight: 400; }
.tune { width: 34px; height: 34px; border-radius: 50%; background: #353535; display: flex; align-items: center; justify-content: center; }
.url { flex: 1; margin-left: 11px; color: #939393; }
.url b { color: #fff; font-weight: 400; }
.extensions { display: flex; align-items: center; gap: 25px; margin-left: 26px; }
.avatar { margin: 0 8px 0 -2px; }
.vbar { width: 3px; height: 22px; border-radius: 2px; background: #000; }
.bookmarks { display: flex; align-items: center; height: 50px; padding: 0 21px 0 18px; background: #353535; border-bottom: 2px solid #636363; }
.apps { margin-right: 21px; }
.marks { flex: 1; display: grid; grid-template-columns: 215px 170px 116px 121px 115px 132px 213px 216px 140px 132px auto; margin-left: 19px; white-space: nowrap; }
.marks a, .all { display: flex; align-items: center; gap: 8px; }
.all { margin-left: 23px; gap: 9px; }

/* application bar */
.appbar { flex: none; display: flex; align-items: center; height: 89px; padding: 0 21px 0 32px; background: #121212; border-bottom: 2px solid #2b2b2b; white-space: nowrap; }
.badge { margin: 0 33px 0 11px; width: 57px; height: 33px; border-radius: 7px; background: #2e2e2e; color: #b8b8b8; line-height: 33px; text-align: center; font-weight: 400; }
.sep { width: 2px; height: 33px; background: #292929; }
.doc { width: 194px; margin-left: 34px; font-weight: 400; font-size: 17px; }
.usage { width: 285px; margin-left: 33px; font-size: 17px; font-weight: 400; }
.usage-row { display: flex; justify-content: space-between; }
.usage-bar { height: 6px; margin-top: 10px; border-radius: 3px; background: #408df6; }
.dim { color: #6e6e6e; }
.tools { display: flex; align-items: center; margin-left: auto; }
.seg { display: flex; align-items: center; gap: 3px; height: 45px; padding: 0 6px; border-radius: 11px; background: #212121; }
.seg button { width: 33px; height: 33px; border-radius: 9px; display: flex; align-items: center; justify-content: center; }
.seg .on { background: #2e2e2e; box-shadow: inset 0 1px 0 #4a4a4a; }
.seg + .sep { margin-left: 22px; }
.pair { display: flex; gap: 25px; margin: 0 34px 0 35px; }
.zoom { display: flex; align-items: center; justify-content: space-between; width: 122px; margin: 0 36px; font-size: 17px; font-weight: 400; }
.zoom + .sep + .seg { margin-left: 22px; }
.acts { display: flex; gap: 43px; margin: 0 39px 0 40px; font-size: 19px; }
.act { display: flex; flex-direction: column; align-items: center; gap: 3px; font-weight: 400; }
.act svg { height: 22px; }
.preview { display: flex; align-items: center; justify-content: center; gap: 10px; width: 146px; height: 45px; border-radius: 10px; background: #408df6; box-shadow: inset 0 1px 0 #79aff9; }

/* left rail */
.work { flex: 1; display: flex; min-height: 0; }
.rail { flex: none; display: flex; flex-direction: column; align-items: center; width: 100px; padding: 22px 0 0; background: #111; border-right: 1px solid #303030; font-size: 16px; line-height: 20px; font-weight: 500; }
.tool { display: flex; flex-direction: column; align-items: center; gap: 4px; height: 78px; flex: none; }
.tool svg { fill: none; stroke: #fff; stroke-width: 2; stroke-linecap: round; stroke-linejoin: round; }
.add { height: 100px; gap: 3px; }
.plus { width: 45px; height: 45px; border-radius: 14px; background: #408df6; box-shadow: inset 0 1px 0 #79aff9; display: flex; align-items: center; justify-content: center; }
.magic svg { fill: url(#magic); stroke: none; }
.magic span { background: linear-gradient(to right, #b79cf5, #6a3df0); -webkit-background-clip: text; background-clip: text; color: transparent; }
.expand { margin-top: auto; width: 67px; height: 69px; padding-bottom: 2px; border-top: 2px solid #292929; display: flex; align-items: center; justify-content: center; }

/* canvas */
.canvas { flex: 1; position: relative; overflow: hidden; background: #212121; }
.laptop { position: absolute; top: 141px; width: 1458px; }
.laptop-a { left: -967px; }
.laptop-b { left: 540px; }
.lid { margin: 0 113px; padding: 24px; border: 2px solid #3c3c3c; border-bottom: 0; border-radius: 40px 40px 0 0; background: #323232; }
.screen { min-height: 737px; border-radius: 12px 12px 0 0; background: #fff; color: #000; overflow: hidden; }
.base { position: relative; height: 41px; border: 2px solid #3c3c3c; border-radius: 3px 3px 14px 14px; background: #323232; }
.notch { width: 164px; height: 16px; margin: 0 auto; border-radius: 0 0 10px 10px; background: #414141; }
.foot { position: absolute; top: 39px; left: 130px; width: 67px; height: 3px; background: #393939; }
.foot:last-child { left: auto; right: 130px; }
.frame-name { position: absolute; left: 691px; top: 97px; font-size: 16px; font-weight: 400; color: #a9a9a9; }

.screen-a { min-height: 931px; padding: 26px 99px 0 0; font-size: 12px; font-weight: 700; }
.strip { display: flex; align-items: center; justify-content: flex-end; height: 52px; padding-right: 13px; border-radius: 10px; background: #d3d3d3; }
.pill { height: 32px; border-radius: 9px; background: #cfa8f8; color: #fff; }
.pill-new { width: 98px; margin-right: 26px; }
.pill-add { width: 33px; margin-left: 19px; }
.panel { display: flex; justify-content: flex-end; height: 606px; margin-top: 27px; padding: 382px 34px 0 0; border-radius: 10px; background: #d3d3d3; }
.pill-email { width: 164px; }

.top { display: grid; grid-template-columns: 393px 394px 1fr; align-items: center; height: 53px; border-bottom: 1px solid #e4e4e4; box-shadow: 0 1px 3px #e4e4e4; }
.brand { padding-left: 16px; font-size: 21px; font-weight: 400; }
.search { display: flex; align-items: center; height: 33px; padding: 0 7px; border: 1px solid #ccc; border-radius: 10px; font-size: 12px; font-weight: 400; }
.search input { flex: 1; min-width: 0; }
input::placeholder { color: #333; opacity: 1; }
.top-icons { display: flex; align-items: center; justify-content: flex-end; gap: 17px; padding: 2px 17px 0 0; }
.page { display: flex; align-items: flex-start; }
.side { flex: none; display: grid; grid-auto-rows: 33px; justify-items: center; align-items: center; align-content: start; width: 59px; height: 683px; padding: 7px 7px 0 0; margin-left: 1px; border-radius: 10px; background: #d3d3d3; }
.cards { flex: 1; display: grid; grid-template-columns: repeat(3, 1fr); align-items: start; gap: 16px; margin: 16px 16px 0 -1px; }
.card { min-height: 619px; padding: 16px 17px 8px; border-radius: 10px; background: #d3d3d3; font-size: 14px; font-weight: 400; line-height: 20px; }
.card-tall { padding-bottom: 25px; }
.card h2 { margin: 0; font-size: 27px; font-weight: 400; line-height: 36px; }
.card p { margin: 12px 0 0; }
.card hr { height: 2px; margin: 21px 0 0; border: 0; background: #c1c1c1; }
.card h3 { margin: 23px 0 0; font-size: 21px; font-weight: 400; line-height: 28px; }
.card .tight { margin-top: 20px; }
.card .after-rows { margin-top: 14px; }
.fields { display: grid; gap: 18px; margin-top: 17px; }
.fields input, .fields select { width: 100%; height: 32px; padding: 0 7px; border-radius: 9px; background: #f5f5f5; color: #333; font-size: 12px; appearance: none; }
.name-row { grid-template-columns: 130px 1fr; margin-top: 16px; }
.card-row { margin-top: 14px; }
.pay-row { grid-template-columns: 1fr 78px; }
.select-wrap { position: relative; margin-top: 19px; }
.select-wrap svg { position: absolute; right: 8px; top: 13px; }
.rows { margin-top: 7px; }
.rows label, .strength { display: flex; align-items: center; justify-content: space-between; height: 33px; }
.switch { appearance: none; width: 33px; height: 17px; border-radius: 9px; background: #fff; display: flex; align-items: center; padding-left: 3px; }
.switch::before { content: ""; width: 11px; height: 11px; border-radius: 50%; background: #cfa8f8; }
.box { position: relative; width: 17px; height: 17px; }
.box input { appearance: none; display: block; width: 17px; height: 17px; border-radius: 4px; background: #fff; }
.box svg { position: absolute; left: 0; top: 0; }
.dot { appearance: none; width: 17px; height: 17px; border: 3px solid #fff; border-radius: 50%; background: #cfa8f8; }
.strength input { appearance: none; width: 141px; height: 13px; margin: 0 auto 0 19px; background: linear-gradient(#cfa8f8, #cfa8f8) center / 100% 3px no-repeat; }
.strength input::-webkit-slider-thumb { appearance: none; width: 13px; height: 13px; border-radius: 50%; background: #cfa8f8; }
.buttons { display: flex; gap: 16px; }
.btn { display: block; width: 132px; height: 33px; margin-top: 16px; padding: 0 7px; border-radius: 9px; background: #cfa8f8; color: #fff; font-size: 12px; text-align: left; }
.buttons .btn { margin-top: 21px; }
.btn-plan { margin-top: 18px; }
.btn-white { background: #fff; color: #000; }

/* overlays */
.tip { position: absolute; right: 109px; top: 22px; width: 365px; height: 55px; padding: 5px 21px; border: 1px solid #333; border-radius: 22px; background: #000; line-height: 22px; font-weight: 400; }
.modes { position: absolute; right: 13px; top: 22px; width: 94px; display: grid; grid-auto-rows: 103px; font-size: 16px; line-height: 20px; }
.mode { display: flex; flex-direction: column; align-items: center; justify-content: flex-start; gap: 8px; font-weight: 500; }
.mode > span { width: 56px; height: 56px; border-radius: 50%; background: #2d2d2d; box-shadow: inset 0 1px 1px #4c4c4c, 0 2px 4px #1a1a1a; display: flex; align-items: center; justify-content: center; }
.mode svg { fill: none; stroke: #fff; stroke-width: 2; stroke-linejoin: round; }
.mode-start { color: #b5b5b5; }
.mode-start > span { background: #408df6; color: #fff; font-size: 19px; box-shadow: inset 0 1px 1px #79aff9; }
.ask { position: absolute; left: calc(50% - 167px); bottom: 34px; width: 335px; height: 55px; display: flex; align-items: center; padding: 0 12px 0 16px; border: 2px solid #2d2d2d; border-radius: 17px; background: #111; }
.ask input { flex: 1; min-width: 0; font-size: 21px; font-weight: 300; }
.ask input::placeholder { color: #555; }
.help { position: absolute; right: 33px; bottom: 33px; width: 56px; height: 56px; border-radius: 50%; background: #000; font-size: 25px; font-weight: 600; }
.vscroll { position: absolute; right: 6px; top: 341px; width: 5px; height: 620px; border-radius: 3px; background: #424242; }
.hscroll { position: absolute; left: 630px; right: 629px; bottom: 14px; height: 6px; border-radius: 3px; background: #424242; }
```
